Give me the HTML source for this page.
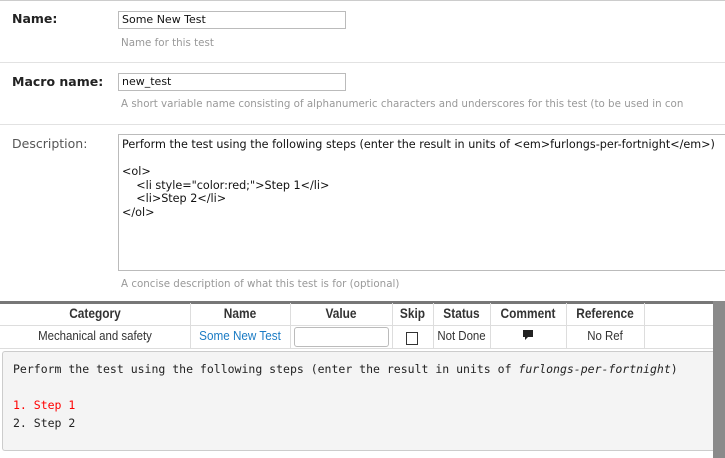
<!DOCTYPE html>
<html><head><style>
body{margin:0;width:725px;height:458px;overflow:hidden;background:#fff;position:relative;font-family:"DejaVu Sans",Verdana,sans-serif}
.a{position:absolute;white-space:nowrap}
.lbl{font-size:12.5px;font-weight:bold;color:#222;left:12px}
.inp{border:1px solid #bbb;height:18px;box-sizing:border-box;font-size:11px;line-height:16px;padding-left:3px;color:#111;background:#fff}
.hint{font-size:10.3px;color:#999;left:121px}
.hr{left:0;width:725px;height:1px;background:#e2e2e2}
.th{font-family:"Liberation Sans",sans-serif;font-size:14px;font-weight:bold;color:#333;text-align:center;transform:scaleX(.85);}
.td{font-family:"Liberation Sans",sans-serif;font-size:13px;color:#333;text-align:center}
.vl{width:1px;background:#ddd;top:303px;height:45px}
.mono{font-family:"DejaVu Sans Mono","Liberation Mono",monospace;font-size:11.5px;color:#222;left:13px}
</style></head><body>
<div class="a hr" style="top:0;background:#ccc"></div>
<div class="a lbl" style="top:11px">Name:</div>
<div class="a inp" style="left:118px;top:11px;width:228px">Some New Test</div>
<div class="a hint" style="top:37px">Name for this test</div>
<div class="a hr" style="top:62px"></div>
<div class="a lbl" style="top:74px">Macro name:</div>
<div class="a inp" style="left:118px;top:73px;width:228px">new_test</div>
<div class="a hint" style="top:98px">A short variable name consisting of alphanumeric characters and underscores for this test (to be used in con</div>
<div class="a hr" style="top:124px"></div>
<div class="a lbl" style="top:136px;font-weight:normal;color:#555">Description:</div>
<div class="a" style="left:118px;top:134px;width:620px;height:137px;border:1px solid #bbb;box-sizing:border-box;font-size:11.2px;color:#111;padding:3px 3px;line-height:13.5px;white-space:pre">Perform the test using the following steps (enter the result in units of &lt;em&gt;furlongs-per-fortnight&lt;/em&gt;)

&lt;ol&gt;
    &lt;li style="color:red;"&gt;Step 1&lt;/li&gt;
    &lt;li&gt;Step 2&lt;/li&gt;
&lt;/ol&gt;</div>
<div class="a hint" style="top:278px">A concise description of what this test is for (optional)</div>

<div class="a" style="left:0;top:301px;width:713px;height:3px;background:#777"></div>
<div class="a" style="left:713px;top:301px;width:12px;height:157px;background:#8a8a8a"></div>
<div class="a" style="left:0;top:325px;width:713px;height:1px;background:#ddd"></div>
<div class="a" style="left:0;top:348px;width:713px;height:1px;background:#ddd"></div>
<div class="a vl" style="left:190px"></div>
<div class="a vl" style="left:290px"></div>
<div class="a vl" style="left:392px"></div>
<div class="a vl" style="left:433px"></div>
<div class="a vl" style="left:490px"></div>
<div class="a vl" style="left:566px"></div>
<div class="a vl" style="left:644px"></div>
<div class="a th" style="left:0;width:190px;top:305px">Category</div>
<div class="a th" style="left:190px;width:100px;top:305px">Name</div>
<div class="a th" style="left:290px;width:102px;top:305px">Value</div>
<div class="a th" style="left:392px;width:41px;top:305px">Skip</div>
<div class="a th" style="left:433px;width:57px;top:305px">Status</div>
<div class="a th" style="left:490px;width:76px;top:305px">Comment</div>
<div class="a th" style="left:566px;width:78px;top:305px">Reference</div>
<div class="a td" style="left:0;width:190px;top:328px;transform:scaleX(.88)">Mechanical and safety</div>
<div class="a td" style="left:190px;width:100px;top:328px;color:#1a7bc4;transform:scaleX(.9)">Some New Test</div>
<div class="a" style="left:294px;top:327px;width:95px;height:20px;border:1px solid #bbb;border-radius:3px;box-sizing:border-box;background:#fff"></div>
<div class="a" style="left:406px;top:332px;width:10px;height:11px;border:1px solid #333;background:#fff"></div>
<div class="a td" style="left:433px;width:57px;top:328px;transform:scaleX(.88)">Not Done</div>
<svg class="a" style="left:523px;top:330px" width="10" height="11"><path d="M0 0H10V7H5L2 10V7H0Z" fill="#222"/></svg>
<div class="a td" style="left:566px;width:78px;top:328px;transform:scaleX(.88)">No Ref</div>

<div class="a" style="left:2px;top:351px;width:711px;height:100px;background:#f4f4f4;border:1px solid #ccc;border-right:none;border-radius:3px 0 0 3px;box-sizing:border-box"></div>
<div class="a mono" style="top:362px">Perform the test using the following steps (enter the result in units of <i>furlongs-per-fortnight</i>)</div>
<div class="a mono" style="top:398px;color:#f00">1.  Step 1</div>
<div class="a mono" style="top:416px">2.  Step 2</div>
</body></html>
